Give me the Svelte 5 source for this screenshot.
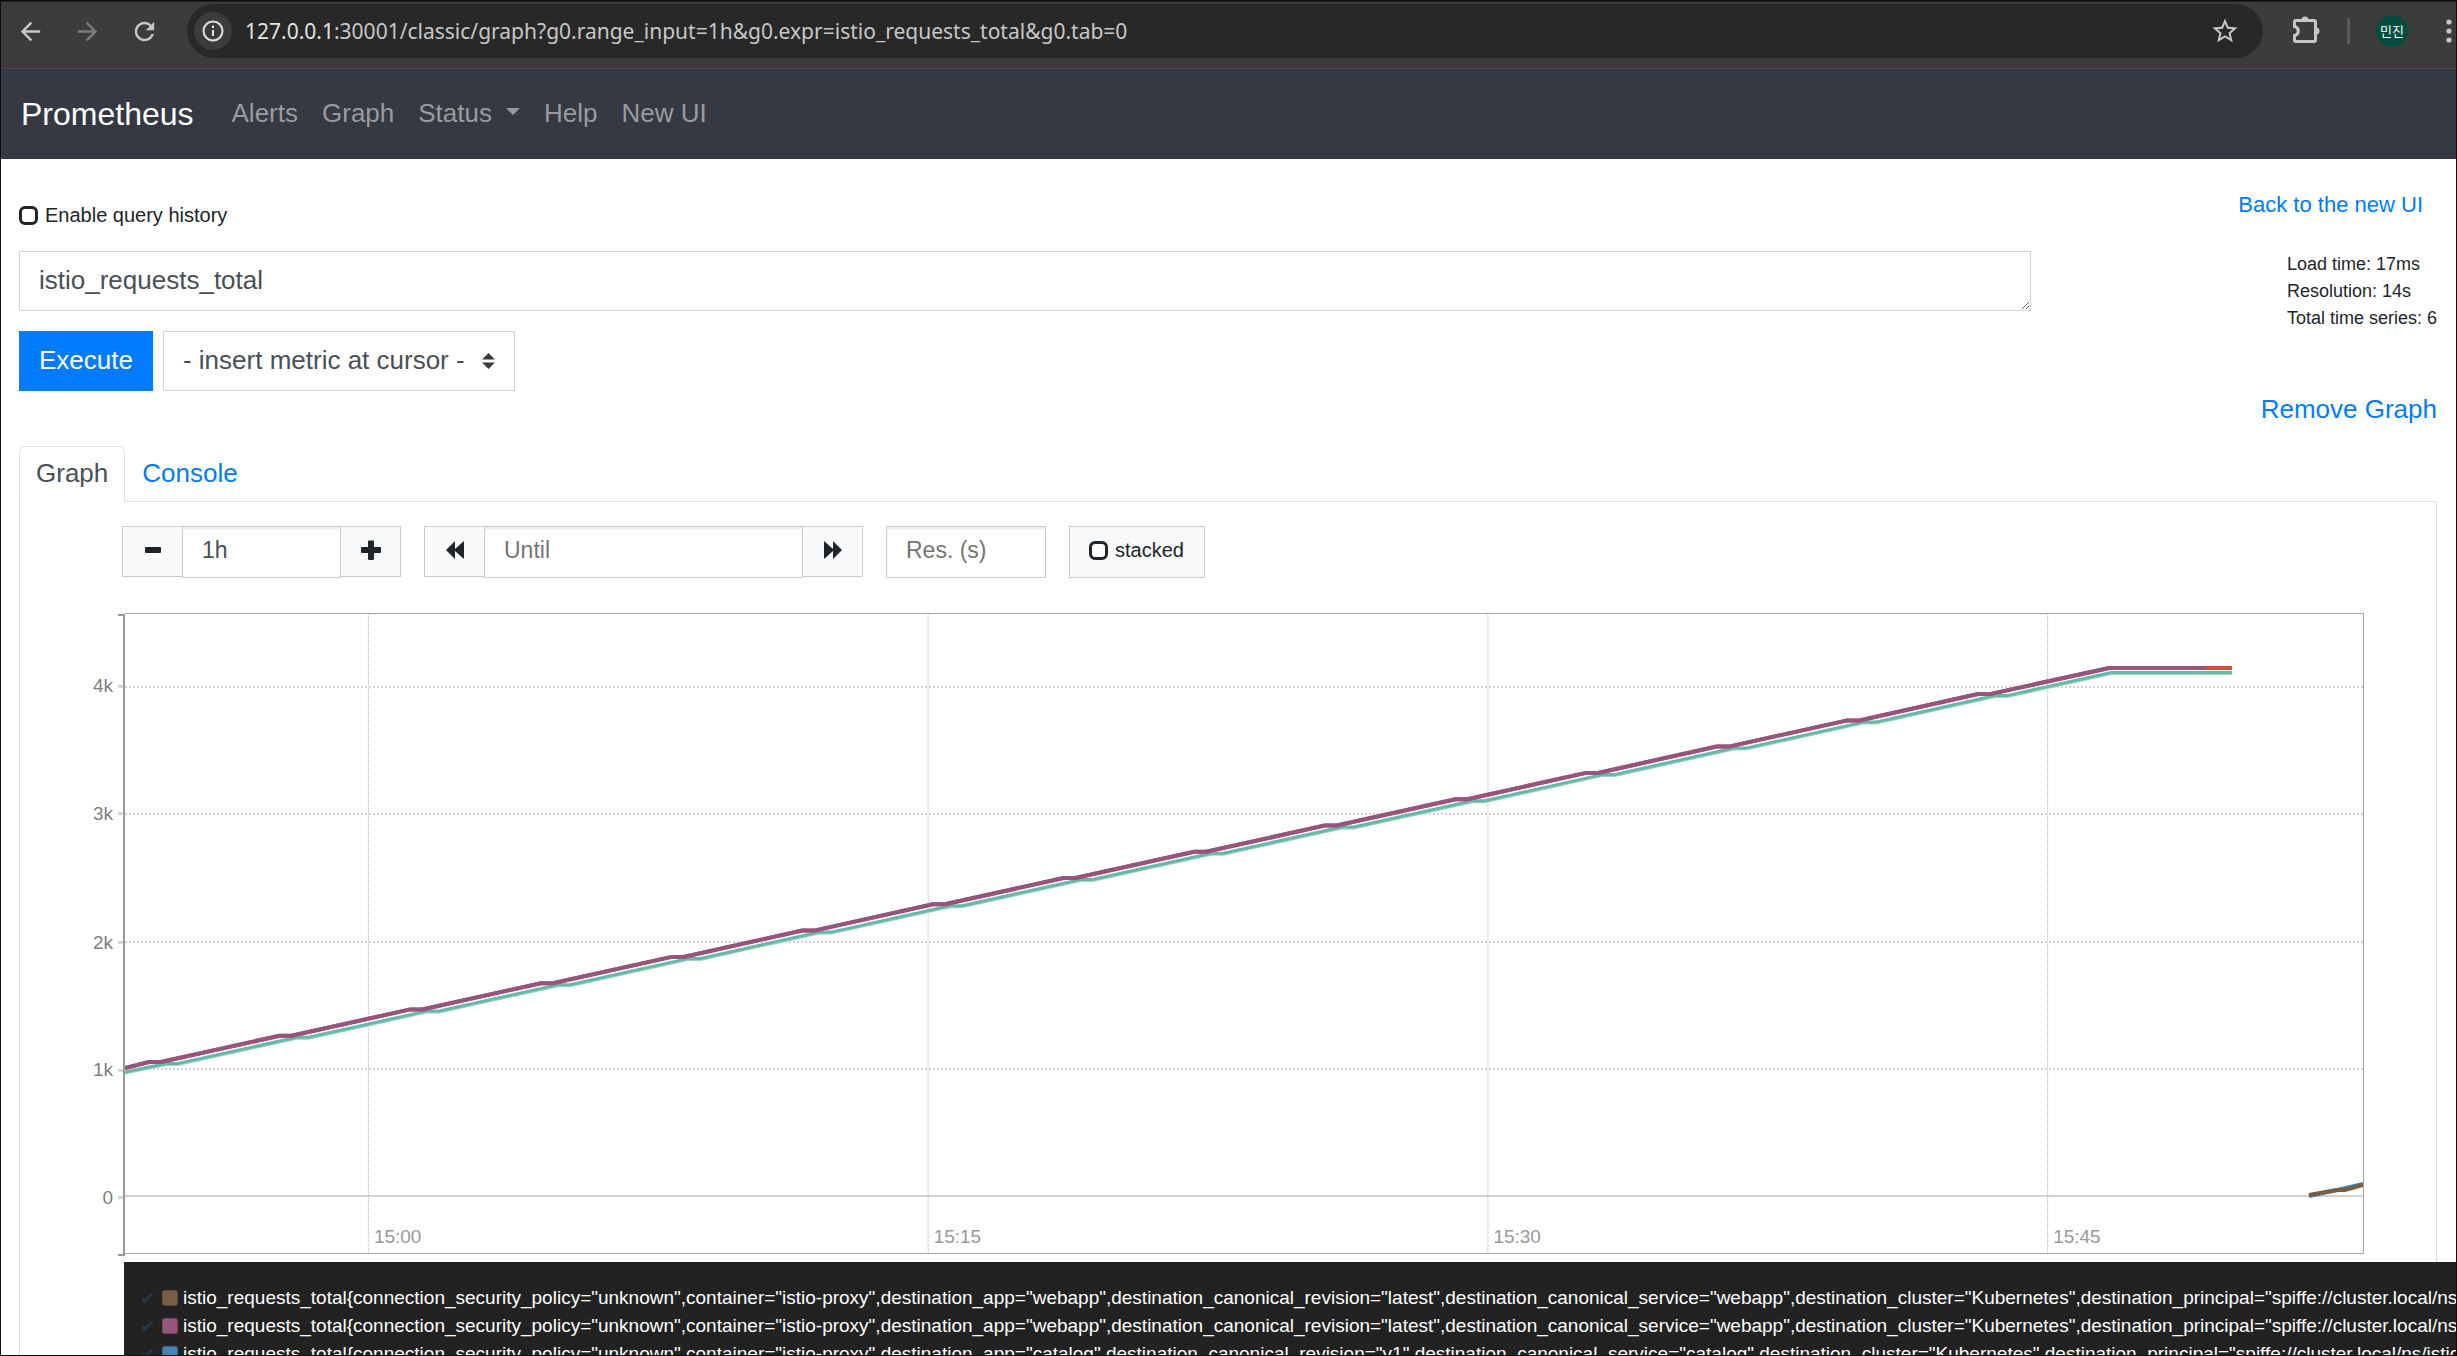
<script lang="ts">
  const navLinks = ['Alerts', 'Graph', 'Status', 'Help', 'New UI'];

  // Plot space: 2239 x 639 units
  const plotW = 2239;
  const plotH = 639;
  const yTicks = [
    { label: '4k', y: 73 },
    { label: '3k', y: 200 },
    { label: '2k', y: 328 },
    { label: '1k', y: 455 },
    { label: '0', y: 582 },
  ];
  const xTicks = [
    { label: '15:00', x: 243 },
    { label: '15:15', x: 803 },
    { label: '15:30', x: 1363 },
    { label: '15:45', x: 1923 },
  ];

  // Counter that rises steadily with a short plateau on each cycle
  function staircase(startY: number, flatStart: number, flatEnd: number, flatY: number, topX: number, topY: number) {
    const pts: number[][] = [[0, startY]];
    for (let k = 0; k < 15; k++) {
      const y = flatY - 26.28 * k;
      pts.push([flatStart + 130.7 * k, y], [flatEnd + 130.7 * k, y]);
    }
    pts.push([topX, topY], [2108, topY]);
    return pts;
  }
  const toPath = (pts: number[][]) => pts.map((p) => p.map((n) => n.toFixed(1)).join(',')).join(' ');

  const upper = staircase(454, 24, 36, 448, 1985, 54);
  const lower = staircase(458, 41, 53, 449.5, 1987, 58.5);
  const upperFull = toPath(upper);
  const upperShort = toPath([...upper.slice(0, -1), [2082, 54]]);
  const lowerFull = toPath(lower);
  const lowerTwin = toPath(lower.map(([x, y]) => [x, y + 1]));

  const web =
    'istio_requests_total{connection_security_policy="unknown",container="istio-proxy",destination_app="webapp",destination_canonical_revision="latest",destination_canonical_service="webapp",destination_cluster="Kubernetes",destination_principal="spiffe://cluster.local/ns/istioinaction/sa/webapp"';
  const cat =
    'istio_requests_total{connection_security_policy="unknown",container="istio-proxy",destination_app="catalog",destination_canonical_revision="v1",destination_canonical_service="catalog",destination_cluster="Kubernetes",destination_principal="spiffe://cluster.local/ns/istioinaction/sa/catalog"';
  const legend = [
    { tone: 'brown', text: web },
    { tone: 'plum', text: web },
    { tone: 'blue', text: cat },
  ];

  let expr = $state('istio_requests_total');
  let range = $state('1h');
</script>

<div class="window">
  <header class="toolbar">
    <button class="icon" aria-label="Back">
      <svg width="29" height="29" viewBox="0 0 24 24"><path d="M20 11H7.830l5.590-5.590L12 4l-8 8 8 8 1.410-1.410L7.830 13H20v-2z" /></svg>
    </button>
    <button class="icon dim" aria-label="Forward">
      <svg width="29" height="29" viewBox="0 0 24 24"><path d="M12 4l-1.410 1.410L16.170 11H4v2h12.170l-5.580 5.590L12 20l8-8z" /></svg>
    </button>
    <button class="icon" aria-label="Reload">
      <svg width="29" height="29" viewBox="0 0 24 24"><path d="M17.650 6.350C16.200 4.900 14.210 4 12 4c-4.420 0-7.990 3.580-7.990 8s3.570 8 7.990 8c3.730 0 6.840-2.550 7.730-6h-2.080c-.82 2.330-3.040 4-5.650 4-3.310 0-6-2.690-6-6s2.690-6 6-6c1.660 0 3.140.69 4.220 1.780L13 11h7V4l-2.350 2.350z" /></svg>
    </button>
    <div class="address">
      <button class="info" aria-label="Site information">
        <svg width="24" height="24" viewBox="0 0 24 24"><circle cx="12" cy="12" r="9.500" /><path d="M12 11v6M12 6.500v2.500" /></svg>
      </button>
      <span class="url"><b>127.0.0.1</b>:30001/classic/graph?g0.range_input=1h&amp;g0.expr=istio_requests_total&amp;g0.tab=0</span>
      <button class="icon" aria-label="Bookmark">
        <svg width="30" height="30" viewBox="0 0 24 24"><path d="M22 9.240l-7.190-.62L12 2 9.190 8.630 2 9.240l5.460 4.730L5.820 21 12 17.270 18.180 21l-1.630-7.030L22 9.240zM12 15.400l-3.760 2.270 1-4.280-3.320-2.880 4.380-.38L12 6.100l1.710 4.040 4.380.38-3.320 2.880 1 4.280L12 15.400z" /></svg>
      </button>
    </div>
    <button class="icon" aria-label="Extensions">
      <svg width="30" height="30" viewBox="0 0 30 30">
        <path class="line" d="M4.500 6v4.500c5 1 5 8 0 9V24q0 1.500 1.500 1.500h18q1.500 0 1.500-1.500V6q0-1.500-1.500-1.500H6q-1.500 0-1.500 1.500z" />
        <path d="M11.500 4a3.500 3.500 0 0 1 7 0zM26 11.500a3.500 3.500 0 0 1 0 7z" />
      </svg>
    </button>
    <span class="rule"></span>
    <button class="avatar">민진</button>
    <button class="icon" aria-label="Menu">
      <svg width="6" height="26" viewBox="0 0 6 26"><circle cx="3" cy="4" r="2.600" /><circle cx="3" cy="13" r="2.600" /><circle cx="3" cy="22" r="2.600" /></svg>
    </button>
  </header>

  <nav class="navbar">
    <a class="brand" href="#top">Prometheus</a>
    {#each navLinks as link}
      <a class="navlink" class:drop={link === 'Status'} href="#{link}">{link}</a>
    {/each}
  </nav>

  <main>
    <div class="history">
      <label class="check"><input type="checkbox" />Enable query history</label>
      <a href="#new">Back to the new UI</a>
    </div>

    <div class="query">
      <div class="entry">
        <textarea aria-label="Expression" rows="1" bind:value={expr}></textarea>
        <div class="actions">
          <button class="execute">Execute</button>
          <select aria-label="Metric"><option>- insert metric at cursor -</option></select>
        </div>
      </div>
      <div class="stats">
        <div>Load time: 17ms</div>
        <div>Resolution: 14s</div>
        <div>Total time series: 6</div>
      </div>
    </div>

    <div class="remove"><a href="#remove">Remove Graph</a></div>

    <div class="tabs">
      <a class="tab active" href="#graph">Graph</a>
      <a class="tab" href="#console">Console</a>
    </div>

    <section class="pane">
      <div class="controls">
        <div class="group">
          <button aria-label="Shrink range"><svg width="20" height="24" viewBox="0 0 20 24"><rect x="2" y="9" width="16" height="6" rx="1" /></svg></button>
          <input class="field range" aria-label="Range" bind:value={range} />
          <button aria-label="Grow range"><svg width="20" height="24" viewBox="0 0 20 24"><path d="M7 3.500q0-1 1-1h4q1 0 1 1V9h6q1 0 1 1v4q0 1-1 1h-6v6q0 1-1 1H8q-1 0-1-1v-6H1q-1 0-1-1v-4q0-1 1-1h6z" /></svg></button>
        </div>
        <div class="group">
          <button aria-label="Earlier"><svg width="20" height="24" viewBox="0 0 20 24"><path d="M1 12L10 3v8l9-8v18l-9-8v8z" /></svg></button>
          <input class="field until" aria-label="Until" placeholder="Until" />
          <button aria-label="Later"><svg width="20" height="24" viewBox="0 0 20 24"><path d="M19 12L10 3v8L1 3v18l9-8v8z" /></svg></button>
        </div>
        <input class="field res" aria-label="Resolution" placeholder="Res. (s)" />
        <label class="stacked"><input type="checkbox" />stacked</label>
      </div>

      <div class="chart">
        <div class="yaxis">
          {#each yTicks as t}
            <span style:top="{(t.y / plotH) * 100}%">{t.label}</span>
          {/each}
        </div>
        <div class="plot">
          <svg viewBox="0 0 {plotW} {plotH}" preserveAspectRatio="none">
            {#each yTicks as t}
              <line class={t.label === '0' ? 'zero' : 'hgrid'} x1="0" x2={plotW} y1={t.y} y2={t.y} />
            {/each}
            {#each xTicks as t}
              <line class="vgrid" x1={t.x + 0.5} x2={t.x + 0.5} y1="0" y2={plotH} />
            {/each}
            <polyline class="mint" points={lowerTwin} />
            <polyline class="teal" points={lowerFull} />
            <polyline class="red" points={upperFull} />
            <polyline class="plum" points={upperShort} />
            <polyline class="steel" points="2185,582 2213,576 2239,570" />
            <polyline class="umber" points="2185,581 2213,576 2221,576 2239,571" />
          </svg>
          {#each xTicks as t}
            <span class="xlabel" style:left="{(t.x / plotW) * 100}%">{t.label}</span>
          {/each}
        </div>
      </div>

      <ul class="legend">
        {#each legend as row}
          <li><span class="tick">✔</span><span class="swatch {row.tone}"></span>{row.text}</li>
        {/each}
      </ul>
    </section>
  </main>
</div>

<style>
  :global(body) {
    overflow: hidden;
    background: #fff;
  }
  .window {
    box-sizing: border-box;
    height: 100vh;
    overflow: hidden;
    display: flex;
    flex-direction: column;
    border: 1px solid #0c0c0c;
    font-family: "Liberation Sans", Arial, sans-serif;
    font-size: 26px;
    color: #212529;
  }
  .window * {
    box-sizing: border-box;
  }
  button {
    font: inherit;
    color: inherit;
    margin: 0;
    padding: 0;
    border: 0;
    background: none;
  }
  svg {
    display: block;
  }
  a {
    color: #007bff;
    text-decoration: none;
  }

  .toolbar {
    display: flex;
    align-items: center;
    flex: none;
    height: 68px;
    padding: 0 4px 8px 15px;
    background: #3c3c3c;
    border-top: 1px solid #222;
    border-bottom: 1px solid #4a4946;
  }
  .icon svg {
    fill: #c7c7c7;
  }
  .icon .line {
    fill: none;
    stroke: #c7c7c7;
    stroke-width: 3;
  }
  .toolbar > .icon + .icon {
    margin-left: 28px;
  }
  .dim svg {
    fill: #7c7c7c;
  }
  .address {
    flex: 1;
    display: flex;
    align-items: center;
    height: 54px;
    margin: 0 27px 0 28px;
    padding: 0 23px 0 7px;
    border-radius: 27px;
    background: #282828;
  }
  .info {
    display: grid;
    place-items: center;
    width: 38px;
    height: 38px;
    border-radius: 50%;
    background: #3c3c3c;
  }
  .info svg {
    fill: none;
    stroke: #e3e3e3;
    stroke-width: 2;
  }
  .url {
    flex: 1;
    margin-left: 13px;
    font-family: "Noto Sans", sans-serif;
    font-size: 21px;
    color: #c7c7c7;
  }
  .url b {
    font-weight: 400;
    color: #e3e3e3;
  }
  .rule {
    width: 3px;
    height: 26px;
    margin: 0 26px 0 27px;
    background: #5c5c5c;
  }
  .avatar {
    width: 32px;
    height: 32px;
    margin-right: 38px;
    border-radius: 50%;
    background: #004d40;
    color: #fff;
    font-family: "Noto Sans CJK KR", sans-serif;
    font-size: 13px;
    line-height: 30px;
  }

  .navbar {
    display: flex;
    align-items: center;
    flex: none;
    height: 90px;
    padding-left: 20px;
    gap: 24px;
    background: #353941;
  }
  .brand {
    margin-right: 14px;
    font-size: 32px;
    color: #fff;
  }
  .navlink {
    padding-bottom: 2px;
    color: #999c9f;
  }
  .drop::after {
    content: "";
    display: inline-block;
    margin-left: 14px;
    vertical-align: 7px;
    border: 7px solid transparent;
    border-top-color: currentColor;
    border-bottom: 0;
  }

  main {
    flex: 1;
    min-height: 0;
    padding: 0 19px 0 18px;
  }
  .history {
    display: flex;
    justify-content: space-between;
    padding: 32px 14px 0 0;
    height: 92px;
    font-size: 22px;
    line-height: 28px;
  }
  .check {
    display: flex;
    align-items: center;
    align-self: flex-start;
    gap: 7px;
    margin-top: 10px;
    font-size: 20px;
  }
  input[type="checkbox"] {
    appearance: none;
    width: 19px;
    height: 19px;
    margin: 0;
    border: 3px solid #212529;
    border-radius: 6px;
    background: #fff;
  }
  .query {
    display: grid;
    grid-template-columns: 5fr 1fr;
    gap: 4px;
  }
  textarea {
    display: block;
    width: 100%;
    height: 60px;
    padding: 9px 19px;
    border: 1px solid #ced4da;
    font: 26px/38px "Liberation Sans", Arial, sans-serif;
    color: #495057;
    overflow: hidden;
  }
  .actions {
    display: flex;
    gap: 10px;
    margin-top: 20px;
  }
  .execute {
    height: 60px;
    padding: 0 20px 2px;
    background: #007bff;
    color: #fff;
  }
  select {
    appearance: none;
    height: 60px;
    width: 352px;
    padding: 0 19px 2px;
    border: 1px solid #ced4da;
    color: #495057;
    font: 26px "Liberation Sans", Arial, sans-serif;
    background: #fff url("data:image/svg+xml,%3Csvg xmlns='http://www.w3.org/2000/svg' viewBox='0 0 4 5'%3E%3Cpath fill='%23343a40' d='M2 0L0 2h4zm0 5L0 3h4z'/%3E%3C/svg%3E") no-repeat right 19px center / 13px 16px;
  }
  .stats {
    justify-self: end;
    font-size: 18px;
    line-height: 27px;
  }
  .remove {
    display: flex;
    justify-content: flex-end;
    line-height: 36px;
  }
  .tabs {
    display: flex;
    margin-top: 19px;
    border-bottom: 1px solid #dee2e6;
  }
  .tab {
    padding: 7px 16px 9px;
    border: 1px solid transparent;
    border-bottom: 0;
    border-radius: 6px 6px 0 0;
    line-height: 38px;
  }
  .active {
    margin-bottom: -1px;
    border-color: #dee2e6;
    background: #fff;
    color: #495057;
  }
  .pane {
    height: 100%;
    padding: 24px 72px 0 0;
    border: 1px solid #ddd;
    border-top: 0;
  }
  .controls {
    display: flex;
    gap: 23px;
    height: 52px;
    margin-left: 102px;
  }
  .group {
    display: flex;
    align-items: flex-start;
  }
  .group button {
    display: grid;
    place-items: center;
    width: 61px;
    height: 51px;
    padding-bottom: 3px;
    border: 1px solid #ccc;
    background: #f8f9fa;
  }
  .group svg {
    fill: #212529;
  }
  .field {
    height: 52px;
    margin: 0;
    padding: 0 19px 3px;
    border: 1px solid #ccc;
    box-shadow: inset 0 2px 2px rgba(0, 0, 0, 0.075);
    font: 23px "Liberation Sans", Arial, sans-serif;
    color: #495057;
  }
  .field::placeholder {
    color: #757575;
  }
  .group .field {
    margin: 0 -1px;
  }
  .range {
    width: 159px;
  }
  .until {
    width: 319px;
  }
  .res {
    width: 160px;
  }
  .stacked {
    display: flex;
    align-items: center;
    gap: 7px;
    padding: 0 20px 3px 19px;
    border: 1px solid #ccc;
    background: #f8f9fa;
    font-size: 20px;
  }

  .chart {
    display: grid;
    grid-template-columns: 105px 1fr;
    margin-top: 35px;
  }
  .yaxis {
    position: relative;
    border-right: 2px solid #999;
    margin: 1px 0 -2px;
    font-size: 19px;
    color: #7f7f7f;
  }
  .yaxis::before,
  .yaxis::after {
    content: "";
    position: absolute;
    right: 0;
    width: 5px;
    height: 2px;
    background: #999;
  }
  .yaxis::before {
    top: 0;
  }
  .yaxis::after {
    bottom: 0;
  }
  .yaxis span {
    position: absolute;
    right: 0;
    display: flex;
    align-items: center;
    gap: 5px;
    height: 22px;
    margin-top: -12px;
  }
  .yaxis span::after {
    content: "";
    width: 5px;
    height: 3px;
    background: #d5d5d5;
  }
  .plot {
    position: relative;
    border: 1px solid #a5a5a5;
    border-left: 0;
  }
  .plot svg {
    width: 100%;
    height: 639px;
  }
  .plot svg * {
    fill: none;
    vector-effect: non-scaling-stroke;
  }
  .hgrid {
    stroke: #d2d2d2;
    stroke-width: 2;
    stroke-dasharray: 2 2;
  }
  .vgrid {
    stroke: #b5b5b5;
    stroke-dasharray: 1 1;
  }
  .zero {
    stroke: #d2d2d2;
    stroke-width: 2;
  }
  polyline {
    stroke-width: 4;
  }
  .plot .mint {
    stroke: #a6d1b0;
    stroke-width: 3;
  }
  .plot .teal {
    stroke: #65b9ac;
    stroke-width: 3;
  }
  .plot .red {
    stroke: #cb513a;
  }
  .plot .plum {
    stroke: #96557e;
  }
  .plot .steel {
    stroke: #4682b4;
  }
  .plot .umber {
    stroke: #785f43;
  }
  .xlabel {
    position: absolute;
    bottom: 4px;
    margin-left: 6px;
    font-size: 19px;
    line-height: 24px;
    color: #999;
  }

  .legend {
    position: relative;
    margin: 8px -92px 0 104px;
    padding: 22px 0 40px 16px;
    list-style: none;
    background: #222;
    color: #fff;
    font-size: 19px;
    white-space: nowrap;
    overflow: hidden;
  }
  .legend li {
    display: flex;
    align-items: center;
    height: 28px;
  }
  .tick {
    flex: none;
    width: 22px;
    font-family: "DejaVu Sans", sans-serif;
    color: #1f3850;
  }
  .swatch {
    flex: none;
    width: 16px;
    height: 16px;
    margin-right: 5px;
    border: 1px solid rgba(0, 0, 0, 0.2);
    border-radius: 3px;
  }
  .brown {
    background: #785f43;
  }
  .swatch.plum {
    background: #96557e;
  }
  .blue {
    background: #4682b4;
  }
</style>
